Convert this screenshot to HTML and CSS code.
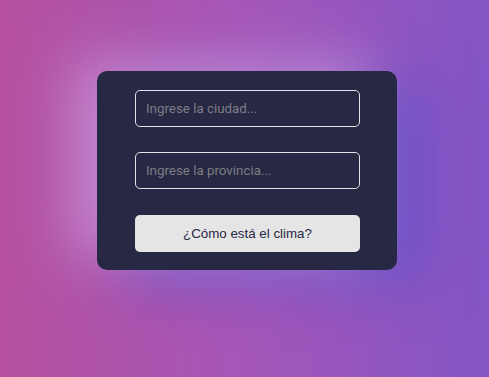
FILE: index.html
```html
<!DOCTYPE html>
<html lang="es">
<head>
<meta charset="utf-8">
<title>Clima</title>
<link rel="stylesheet" href="styles.css">
</head>
<body>
<main class="page">
  <form class="card">
    <input class="field" type="text" placeholder="Ingrese la ciudad...">
    <input class="field" type="text" placeholder="Ingrese la provincia...">
    <button class="btn" type="button">¿Cómo está el clima?</button>
  </form>
</main>
</body>
</html>
```
FILE: styles.css
```css
* { box-sizing: border-box; }
html, body { margin: 0; height: 100%; }
body {
  font-family: Roboto, "Liberation Sans", sans-serif;
  background: linear-gradient(to right, #b6519f 0%, #a456b8 50%, #8456c6 100%);
  overflow: hidden;
}
.page {
  height: 100%;
  display: flex;
  justify-content: center;
  padding-top: 71px;
  padding-left: 5px;
}
.card {
  width: 300px;
  height: 199px;
  background: #272843;
  border-radius: 10px;
  padding: 19px 37px 0 38px;
  display: flex;
  flex-direction: column;
  gap: 25px;
  box-shadow: -28px -12px 55px rgba(205, 150, 215, 0.75),
              28px 12px 55px rgba(95, 80, 200, 0.8);
}
.field {
  height: 37px;
  width: 225px;
  background: transparent;
  border: 1px solid #e2e2e6;
  border-radius: 5px;
  padding: 0 10px;
  font-family: Roboto, "Liberation Sans", sans-serif;
  font-size: 13.333px;
  color: #ddd;
  outline: none;
}
.field::placeholder { color: #7e7e86; }
.btn {
  margin-top: 1px;
  height: 37px;
  width: 225px;
  border: none;
  border-radius: 5px;
  background: #e5e5e5;
  color: #272843;
  font-family: "Liberation Sans", Arial, sans-serif;
  font-size: 13.333px;
  cursor: pointer;
}
```
